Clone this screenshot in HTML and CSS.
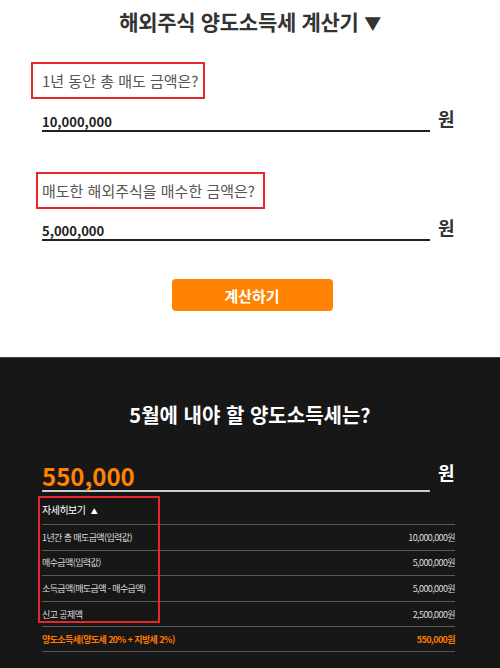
FILE: index.html
```html
<!DOCTYPE html>
<html lang="ko">
<head>
<meta charset="utf-8">
<link rel="stylesheet" href="styles.css">
</head>
<body>
<section class="calc">
  <h1 class="title">해외주식 양도소득세 계산기 <span class="caret">▼</span></h1>

  <div class="field field--sell">
    <div class="q q--sell">1년 동안 총 매도 금액은?</div>
    <div class="inrow">
      <div class="in">10,000,000</div>
      <span class="won">원</span>
    </div>
  </div>

  <div class="field field--buy">
    <div class="q q--buy">매도한 해외주식을 매수한 금액은?</div>
    <div class="inrow">
      <div class="in">5,000,000</div>
      <span class="won">원</span>
    </div>
  </div>

  <div class="btnwrap"><button class="btn">계산하기</button></div>
</section>

<section class="result">
  <h2 class="rtitle">5월에 내야 할 양도소득세는?</h2>
  <div class="inrow inrow--dark">
    <div class="out">550,000</div>
    <span class="won won--dark">원</span>
  </div>
  <div class="details">
    <div class="toggle">자세히보기 <span class="up">▲</span></div>
    <div class="row"><span>1년간 총 매도금액(입력값)</span><span>10,000,000원</span></div>
    <div class="row"><span>매수금액(입력값)</span><span>5,000,000원</span></div>
    <div class="row"><span>소득금액(매도금액 - 매수금액)</span><span>5,000,000원</span></div>
    <div class="row"><span>신고 공제액</span><span>2,500,000원</span></div>
    <div class="row row--total"><span>양도소득세(양도세 20% + 지방세 2%)</span><span>550,000원</span></div>
    <div class="mark"></div>
  </div>
</section>
</body>
</html>
```

FILE: styles.css
```css
* { box-sizing: border-box; }
html, body { margin: 0; padding: 0; }
body {
  width: 500px;
  height: 668px;
  overflow: hidden;
  font-family: "Noto Sans CJK KR", "Noto Sans", sans-serif;
  background: #fff;
}

.calc {
  padding: 7px 45px 46px 42px;
}
.title {
  margin: 0;
  font-size: 21px;
  line-height: 28px;
  font-weight: 700;
  color: #333;
  text-align: center;
  letter-spacing: -0.3px;
  padding-left: 3px;
}
.caret { font-size: 17px; }

.field--sell { margin-top: 25px; }
.field--buy { margin-top: 40px; }

.q {
  display: inline-block;
  border: 2px solid #e8262b;
  font-size: 15px;
  line-height: 21px;
  color: #555;
  padding-top: 6px;
  padding-bottom: 6px;
}
.q--sell { margin-left: -11px; padding-left: 9px; padding-right: 5px; }
.q--buy { margin-left: -6px; padding-left: 4px; padding-right: 8px; }

.inrow {
  display: flex;
  align-items: flex-start;
  gap: 8px;
}
.field--sell .inrow { margin-top: 15px; }
.field--buy .inrow { margin-top: 14px; }

.in {
  flex: 0 0 388px;
  font-size: 13px;
  line-height: 16px;
  font-weight: 600;
  color: #222;
  border-bottom: 2px solid #222;
}
.won {
  font-size: 18px;
  line-height: 18px;
  font-weight: 700;
  color: #333;
  margin-top: -5px;
}

.btnwrap {
  display: flex;
  justify-content: center;
  margin-top: 38px;
  padding-left: 7px;
}
.btn {
  width: 161px;
  height: 32px;
  border: 0;
  border-radius: 4px;
  background: #ff8200;
  color: #fff;
  font-family: inherit;
  font-size: 15px;
  font-weight: 700;
}

.result {
  background: #171717;
  border-top: 1px solid #444;
  padding: 43px 45px 20px 42px;
  height: 320px;
}
.rtitle {
  margin: 0;
  font-size: 20px;
  line-height: 28px;
  font-weight: 700;
  color: #fff;
  text-align: center;
  padding-left: 3px;
}
.inrow--dark { margin-top: 33px; }
.out {
  flex: 0 0 388px;
  font-size: 24px;
  line-height: 28px;
  font-weight: 700;
  color: #ff8200;
  border-bottom: 2px solid #ccc;
}
.won--dark { color: #fff; margin-top: 1px; }

.details {
  position: relative;
  width: 413px;
}
.toggle {
  font-size: 10px;
  line-height: 16px;
  color: #fff;
  padding: 10px 0 5px;
  letter-spacing: -0.5px;
}
.up { font-size: 7px; margin-left: 3px; }
.row {
  display: flex;
  justify-content: space-between;
  align-items: center;
  height: 25.6px;
  border-top: 1px solid #5a5a5a;
  font-size: 9px;
  color: #ddd;
  letter-spacing: -0.6px;
}
.row--total {
  color: #ff7a00;
  font-weight: 700;
  border-bottom: 1px solid #555;
}
.mark {
  position: absolute;
  left: -4px;
  top: 4px;
  width: 122px;
  height: 127px;
  border: 2px solid #e8262b;
}
```
